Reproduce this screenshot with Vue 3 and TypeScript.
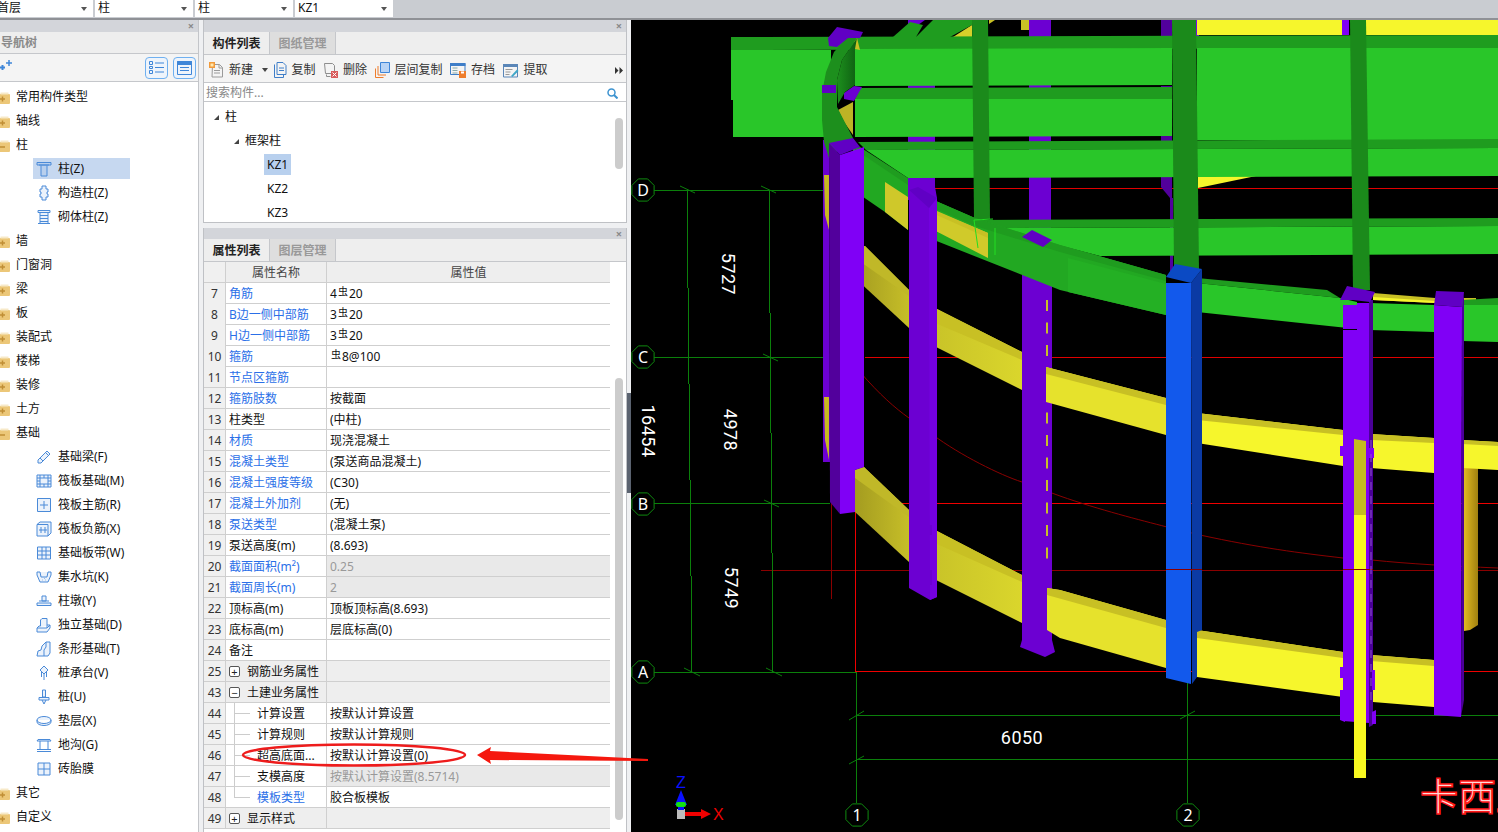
<script setup lang="ts">
type TreeRow = { label: string; kind: 'open' | 'closed' | 'leaf'; icon?: string; sel?: boolean }
type PropRow = {
  n: number; name: string; link?: boolean; val?: string; rebar?: [string, string]; grey?: boolean
  group?: '+' | '-'; child?: boolean; last?: boolean
}

const icons: Record<string, string> = {
  zhu: 'M1 1.5h14v2.5H1z M3 4h10 M5 4.5v10.5h6V4.5',
  gz: 'M6 1h4v3h2v3h-1v2h1v3h-2v3H6v-3H4V9h1V7H4V4h2z',
  qt: 'M2 1.5h12v2H2z M4 3.5v11h8v-11 M4 6.5h8 M4 9.5h8 M4 12.5h8 M2 14.5h12',
  jcl: 'M2 11L11 2l3 3-9 9H2z M4 9l3 3 M9.5 3.5l3 3',
  fb: 'M1 2h14v12H1z M4 5h8v6H4z M1 5h3 M1 8h3 M1 11h3 M12 5h3 M12 8h3 M12 11h3 M4 2v3 M8 2v3 M12 2v3 M4 11v3 M8 11v3 M12 11v3',
  fz: 'M1.500 1.500h13v13h-13z M8 4v8 M4 8h8',
  ff: 'M1 3.500h11v11.500H1z M1 3.500l3-2.500h11v11l-3 3 M5 6v6 M9 6v6 M3 9h8',
  bd: 'M1.500 2h13v12h-13z M6 2v12 M10 2v12 M1.500 6h13 M1.500 10h13',
  js: 'M1 3h3l1 5h6l1-5h3 M1 3v3l3 7h8l3-7V3 M6 11h.5 M9 11h.5 M8 9.500h.5',
  zd: 'M6 3h4v5H6z M3 8h10 M1 10h14v2.500H1z',
  dl: 'M1 15V11h10l3-3v3l-3 4z M1 11l2-2h1.500V3L6 1.500h5V8H14 M11 11V8',
  tx: 'M1 15l1-5 3-1 1-4 4-4h4v11l-2 3z M10 1v5l-2 3v6',
  zc: 'M8 1l4 4-4 4-4-4z M8 9v6 M5.500 7v5 M10.500 7v5',
  z: 'M6.500 1h3v7h-3z M3 8.500h10v2.500H3z M6 11l2 4 2-4',
  dc: 'M1 7a7 3.500 0 0 1 14 0v2a7 3.500 0 0 1-14 0z M1 7a7 3.500 0 0 0 14 0',
  dg: 'M1 14.500h14 M1 12.500h14 M2 2.500h12l1 1.500H1z M4 4v8.500 M12 4v8.500',
  ztm: 'M2 2h12v12H2z M8 2v12 M2 8h12',
}

const navRows: TreeRow[] = [
  { label: '常用构件类型', kind: 'closed' },
  { label: '轴线', kind: 'closed' },
  { label: '柱', kind: 'open' },
  { label: '柱(Z)', kind: 'leaf', icon: 'zhu', sel: true },
  { label: '构造柱(Z)', kind: 'leaf', icon: 'gz' },
  { label: '砌体柱(Z)', kind: 'leaf', icon: 'qt' },
  { label: '墙', kind: 'closed' },
  { label: '门窗洞', kind: 'closed' },
  { label: '梁', kind: 'closed' },
  { label: '板', kind: 'closed' },
  { label: '装配式', kind: 'closed' },
  { label: '楼梯', kind: 'closed' },
  { label: '装修', kind: 'closed' },
  { label: '土方', kind: 'closed' },
  { label: '基础', kind: 'open' },
  { label: '基础梁(F)', kind: 'leaf', icon: 'jcl' },
  { label: '筏板基础(M)', kind: 'leaf', icon: 'fb' },
  { label: '筏板主筋(R)', kind: 'leaf', icon: 'fz' },
  { label: '筏板负筋(X)', kind: 'leaf', icon: 'ff' },
  { label: '基础板带(W)', kind: 'leaf', icon: 'bd' },
  { label: '集水坑(K)', kind: 'leaf', icon: 'js' },
  { label: '柱墩(Y)', kind: 'leaf', icon: 'zd' },
  { label: '独立基础(D)', kind: 'leaf', icon: 'dl' },
  { label: '条形基础(T)', kind: 'leaf', icon: 'tx' },
  { label: '桩承台(V)', kind: 'leaf', icon: 'zc' },
  { label: '桩(U)', kind: 'leaf', icon: 'z' },
  { label: '垫层(X)', kind: 'leaf', icon: 'dc' },
  { label: '地沟(G)', kind: 'leaf', icon: 'dg' },
  { label: '砖胎膜', kind: 'leaf', icon: 'ztm' },
  { label: '其它', kind: 'closed' },
  { label: '自定义', kind: 'closed' },
]

const props: PropRow[] = [
  { n: 7, name: '角筋', link: true, rebar: ['4', '20'] },
  { n: 8, name: 'B边一侧中部筋', link: true, rebar: ['3', '20'] },
  { n: 9, name: 'H边一侧中部筋', link: true, rebar: ['3', '20'] },
  { n: 10, name: '箍筋', link: true, rebar: ['', '8@100'] },
  { n: 11, name: '节点区箍筋', link: true },
  { n: 12, name: '箍筋肢数', link: true, val: '按截面' },
  { n: 13, name: '柱类型', val: '(中柱)' },
  { n: 14, name: '材质', link: true, val: '现浇混凝土' },
  { n: 15, name: '混凝土类型', link: true, val: '(泵送商品混凝土)' },
  { n: 16, name: '混凝土强度等级', link: true, val: '(C30)' },
  { n: 17, name: '混凝土外加剂', link: true, val: '(无)' },
  { n: 18, name: '泵送类型', link: true, val: '(混凝土泵)' },
  { n: 19, name: '泵送高度(m)', val: '(8.693)' },
  { n: 20, name: '截面面积(m²)', link: true, val: '0.25', grey: true },
  { n: 21, name: '截面周长(m)', link: true, val: '2', grey: true },
  { n: 22, name: '顶标高(m)', val: '顶板顶标高(8.693)' },
  { n: 23, name: '底标高(m)', val: '层底标高(0)' },
  { n: 24, name: '备注' },
  { n: 25, name: '钢筋业务属性', group: '+' },
  { n: 43, name: '土建业务属性', group: '-' },
  { n: 44, name: '计算设置', child: true, val: '按默认计算设置' },
  { n: 45, name: '计算规则', child: true, val: '按默认计算规则' },
  { n: 46, name: '超高底面...', child: true, val: '按默认计算设置(0)' },
  { n: 47, name: '支模高度', child: true, val: '按默认计算设置(8.5714)', grey: true },
  { n: 48, name: '模板类型', child: true, last: true, link: true, val: '胶合板模板' },
  { n: 49, name: '显示样式', group: '+' },
]

const combos = ['首层', '柱', '柱', 'KZ1']

const G1 = '#29c629', G2 = '#1f9c1f', G3 = '#1b8a1b', G4 = '#22a822'
const P1 = '#8000f6', P2 = '#6c00d2', P3 = '#52009c', P4 = '#6000c4'
const Y1 = '#f6f62c', Y2 = '#c8c024'

// [x, y, width, colour] of the straight horizontal grid lines
const hLines: [number, number, number, string][] = [
  [910, 188, 588, '#e00000'], [865, 357, 633, '#e00000'], [860, 503, 638, '#f00000'],
  [761, 570, 737, '#8a0000'], [855, 671, 643, '#f00000'],
  [652, 190, 171, '#0b7f0b'], [652, 357, 171, '#0b7f0b'], [652, 503, 178, '#0b7f0b'], [652, 672, 204, '#0b7f0b'],
  [857, 715, 641, '#0b7f0b'], [857, 759, 641, '#0b7f0b'],
]

const back: [string, string][] = [
  ['908,20 925,20 918,25 908,25', P2], ['908,85 935,85 935,200 908,200', P2],
  ['1021,20 1029,20 1029,30 1021,30', Y2], ['1029,20 1051,20 1051,300 1029,300', P2],
  ['1161,20 1172,20 1172,37 1161,37', P3], ['1161,86 1172,86 1172,99 1161,99', P3],
  ['1161,136 1172,136 1172,141 1161,141', P3], ['1161,177 1172,177 1172,198 1170,198 1161,187', P3],
  ['1170,198 1173,198 1173,272 1170,272', P3], ['1196,20 1199,20 1199,37 1196,37', P1],
  ['1197,20 1342,20 1342,35 1197,35', Y1], ['1342,20 1349,20 1349,35 1342,35', P1],
  ['1366,20 1498,20 1498,35 1366,35', Y1], ['1198,176 1256,176 1198,188', Y1],
  ['953,37 972,25 972,37', '#d6d02a'], ['989,20 995,20 989,24', Y2],
]

const bands: [string, string][] = [
  ['731,37 1498,35 1498,48 731,50', G2],
  ['731,50 831,50 831,137 733,137 733,100 731,100', G1], ['855,49 1172,48 1172,85 855,86', G1],
  ['1197,48 1498,48 1498,140 1197,140', G1], ['855,99 1172,99 1172,136 855,137', G1],
  ['860,88 1172,87 1172,99 855,99', G2], ['858,142 1498,139 1498,148 866,150', G2],
  ['866,150 1498,148 1498,176 908,178', G1], ['975,220 1498,218 1498,226 993,228', G2],
  ['993,228 1498,226 1498,254 1100,256', G1],
  ['972,20 988,20 990,219 974,219', G3], ['1172,20 1196,20 1199,270 1174,270', G3],
  ['1350,20 1366,20 1370,290 1353,290', G3],
]

const arcs: [string, string][] = [
  ['893,37 910,22 923,25 916,37', G2], ['916,37 933,20 972,20 972,25 950,37', G2],
  ['823,140 829,140 830,462 823,462', P2],
  ['824,175 829,175 829,230 825,215', '#c8b820'], ['824,397 829,397 829,460 825,440', '#c8b820'],
  ['838,110 853,102 853,135 844,122', '#bdb325'],
  ['844,93 854,86 862,87 854,101 844,99', P2], ['853,38 857,38 860,50 855,49', Y2],
  ['857,38 855,49 855,85 845,92 838,104 837,80 842,60', 'url(#arc)'],
  ['847,38 857,38 842,60 837,80 837,107 853,138 829,158 824,142 822,120 822,93 826,72 834,52', '#1d8f1d'],
  ['822,85 836,85 836,93 822,93', P4],
  ['828,38 837,27 863,32 860,38 848,38 837,47 829,46', P4],
]

const lowerFar: [string, string][] = [
  ['1022,268 1052,268 1052,640 1055,652 1045,657 1020,647 1022,640', P2],
  ['1020,370 1023,370 1023,382 1020,382', P2], ['1020,592 1023,592 1023,612 1020,612', P2],
  ['1464,468 1478,468 1478,625 1470,630 1464,631', 'url(#gold)'],
]

const yellow: [string, string][] = [
  ['855,247 865,246 909,290 909,328 855,278', 'url(#yd)'], ['855,247 865,246 909,290 909,296 855,258', '#c0b828'],
  ['928,312 937,309 1022,352 1022,390 928,343', 'url(#ym)'], ['928,312 937,309 1022,352 1022,360 928,320', Y2],
  ['1046,367 1166,398 1166,435 1046,402', '#e6e22c'], ['1046,367 1166,398 1166,405 1046,374', Y2],
  ['1197,413 1343,430 1343,466 1197,443', Y1], ['1197,413 1343,430 1343,435 1197,420', Y2],
  ['1371,434 1434,438 1434,473 1371,468', Y1], ['1371,434 1434,438 1434,443 1371,440', Y2],
  ['1462,440 1498,442 1498,470 1462,468', Y1], ['1462,440 1498,442 1498,446 1462,444', Y2],
  ['855,470 864,467 909,510 909,562 855,512', 'url(#yd)'], ['855,470 864,467 909,510 909,517 855,478', '#c0b828'],
  ['928,533 937,531 1022,575 1022,623 930,577', 'url(#ym)'], ['928,533 937,531 1022,575 1022,582 928,540', Y2],
  ['1047,588 1060,590 1166,620 1166,668 1060,638 1047,630', '#e6e22c'], ['1047,588 1060,590 1166,620 1166,628 1047,595', Y2],
  ['1197,630 1343,652 1343,697 1197,677', Y1], ['1197,630 1343,652 1343,658 1197,638', Y2],
  ['1371,655 1434,660 1434,707 1373,702', Y1], ['1371,655 1434,660 1434,666 1371,661', Y2],
  ['1373,293 1435,298 1435,303 1373,300', Y2], ['1373,297 1435,301 1435,303 1373,300', Y1],
  ['1462,298 1476,298 1476,303 1462,303', Y2],
]

const front: [string, string][] = [
  ['853,148 885,165 908,180 908,230 885,212 853,190', G4], ['885,182 908,197 908,230 885,212', '#cfc82a'],
  ['853,148 860,147 908,178 908,185', G2],
  ['929,198 975,218 1060,245 1166,275 1166,315 1060,290 929,238', G4],
  ['929,198 975,218 1060,245 1166,275 1166,281 1060,252 975,226 929,206', G2],
  ['928,208 988,233 988,258 928,227', '#d0ca2a'], ['930,208 988,233 988,238 930,212', Y2],
  ['1068,258 1166,284 1166,315 1068,292', '#24b024'],
  ['1197,278 1327,290 1340,298 1197,283', G2], ['1197,283 1340,298 1357,302 1357,329 1197,312', G1],
  ['1370,303 1434,305 1434,332 1370,330', G1], ['1462,300 1498,298 1498,305 1462,305', G2],
  ['1462,305 1498,305 1498,342 1462,341', G1],
]

const columns: [string, string][] = [
  ['909,187 935,187 937,198 937,597 930,600 909,588', P2], ['929,208 937,198 937,597 930,600', '#7400e0'],
  ['909,190 918,187 937,198 929,208', P4],
  ['925,525 932,525 932,535 925,535', P2], ['925,570 932,570 932,585 925,585', P2],
  ['829,143 840,155 840,514 830,502', P3], ['840,155 864,147 864,467 855,470 855,512 840,514', P1],
  ['829,143 853,138 860,147 840,155', P4],
  ['1166,283 1191,283 1191,684 1166,678', '#1259ec'], ['1191,283 1202,269 1202,630 1197,632 1197,677 1192,684', '#0b3aa4'],
  ['1166,277 1175,264 1202,269 1191,283', '#0b4ac4'],
  ['1343,305 1357,305 1357,329 1343,329', P1],
  ['1343,330 1369,330 1369,723 1343,721', P1], ['1357,303 1369,303 1369,330 1357,330', P1],
  ['1369,300 1373,300 1373,725 1369,727', '#4a0098'],
  ['1340,300 1347,286 1375,292 1370,302 1353,300', P4],
  ['1340,446 1345,446 1345,456 1340,456', P1], ['1369,448 1374,448 1374,458 1369,458', P1],
  ['1340,667 1345,667 1345,678 1340,678', P1], ['1340,690 1345,690 1345,722 1340,720', P1],
  ['1372,670 1375,670 1375,690 1372,690', P1], ['1372,712 1376,710 1376,724 1372,724', P1],
  ['1434,305 1462,307 1461,717 1434,715', P1], ['1462,307 1464,292 1464,700 1461,717', '#4a0098'],
  ['1434,305 1436,291 1464,292 1462,307', P4],
  ['1354,439 1366,441 1366,515 1354,515', '#c4bc20'], ['1354,515 1366,515 1366,778 1354,778', '#f8f820'],
]

const dashes = Array.from({ length: 12 }, (_, i) => 300 + i * 22.500)
const grids = [
  { t: 'D', x: 643, y: 190 }, { t: 'C', x: 643, y: 357 }, { t: 'B', x: 643, y: 504 },
  { t: 'A', x: 643, y: 672 }, { t: '1', x: 857, y: 815 }, { t: '2', x: 1188, y: 815 },
]
const octagon = (x: number, y: number) =>
  Array.from({ length: 8 }, (_, i) => {
    const a = (Math.PI / 4) * i + Math.PI / 8
    return `${(x + 12 * Math.cos(a)).toFixed(1)},${(y + 12 * Math.sin(a)).toFixed(1)}`
  }).join(' ')
const ticks = [
  [680, 186, 695, 193], [761, 186, 776, 193], [763, 354, 778, 361], [764, 500, 779, 507],
  [684, 668, 700, 676], [766, 668, 782, 676], [849, 720, 864, 711], [849, 764, 864, 756], [1180, 719, 1195, 711],
]
</script>

<template>
  <div class="app">
    <div class="topbar">
      <div v-for="(c, i) in combos" :key="i" class="combo">
        <span>{{ c }}</span><i class="caret"></i>
      </div>
    </div>
    <div class="main">
      <aside class="nav">
        <div class="strip"><span class="close">×</span></div>
        <div class="nav-title">导航树</div>
        <div class="nav-tools">
          <svg class="plus" width="13" height="12" viewBox="0 0 13 12">
            <path d="M0 7.500h5M2.500 5v5" stroke="#3f86d8" stroke-width="2" fill="none" />
            <path d="M6 3h6M9 0v6" stroke="#3f86d8" stroke-width="1.500" fill="none" />
          </svg>
          <span class="grow"></span>
          <button class="tool-btn">
            <svg width="15" height="13" viewBox="0 0 15 13" fill="none" stroke="#3f86d8">
              <path d="M.5 .5h3v3h-3z M.5 5.500h3v2h-3z M.5 9.500h3v3h-3z M6 2h9 M6 6.500h9 M6 11h9" />
            </svg>
          </button>
          <button class="tool-btn">
            <svg width="15" height="14" viewBox="0 0 15 14" fill="none" stroke="#3f86d8">
              <path d="M.5 .5h14v13H.5z M3 6.500h9 M3 9.500h9" />
              <path d="M.5 .5h14v3H.5z" fill="#3f86d8" />
            </svg>
          </button>
        </div>
        <div class="nav-tree">
          <div v-for="r in navRows" :key="r.label" class="nav-row" :class="{ leaf: r.kind === 'leaf', sel: r.sel }">
            <svg v-if="r.kind !== 'leaf'" class="folder" width="10" height="13" viewBox="6 0 10 13">
              <path d="M0 3a1 1 0 0 1 1-1h4l1.500 1H15a1 1 0 0 1 1 1v8a1 1 0 0 1-1 1H1a1 1 0 0 1-1-1z" fill="#ecc778" />
              <path d="M6.500 1.500h8v2h-8z" fill="#f7e9c8" />
              <path v-if="r.kind === 'closed'" d="M6 8h5M8.500 5.500v5" stroke="#c08e35" stroke-width="1.500" fill="none" />
              <path v-else d="M6 8h5" stroke="#c08e35" stroke-width="1.500" fill="none" />
            </svg>
            <svg v-else class="leaf-icon" width="16" height="16" viewBox="0 0 16 16">
              <path :d="icons[r.icon!]" fill="#4a8ad81c" stroke="#4a8ad8" stroke-width="1" />
            </svg>
            <span>{{ r.label }}</span>
          </div>
        </div>
      </aside>

      <section class="mid">
        <div class="panel list-panel">
          <div class="strip"><span class="close">×</span></div>
          <div class="tabs">
            <div class="tab on">构件列表</div>
            <div class="tab">图纸管理</div>
          </div>
          <div class="tools">
            <div class="tool w55">
              <svg width="15" height="16" viewBox="0 0 15 16" fill="none">
                <path d="M3.500 2.500h7l3 3v9.500h-10.500z M10 2.500v3.500h3.500 M5 8.500h6 M5 11h6" stroke="#9a9a9a" />
                <path d="M0 0h6v6H0z" fill="#f29a3a" /><path d="M1.500 1.500h3v3h-3z" fill="#ffe8b0" />
              </svg>
              <span>新建</span><i class="caret small"></i>
            </div>
            <div class="tool">
              <svg width="14" height="16" viewBox="0 0 14 16" fill="none" stroke="#3f7ec8">
                <path d="M1.500 2.500v13h9V12 M4 .5h6l3 3v9H4z M6 6h5 M6 8.500h5" />
              </svg>
              <span>复制</span>
            </div>
            <div class="tool">
              <svg width="15" height="16" viewBox="0 0 15 16" fill="none">
                <path d="M1.500 1.500h8l2 2v8h-9z M3.500 12.500v2h4" stroke="#8e8e8e" />
                <path d="M8 9h7v7H8z" fill="#d95b5b" /><path d="M9.500 10.500l4 4M13.500 10.500l-4 4" stroke="#fff" />
              </svg>
              <span>删除</span>
            </div>
            <div class="tool">
              <svg width="15" height="16" viewBox="0 0 15 16" fill="none">
                <path d="M.5 6.500v9h8 M3 4v9h8" stroke="#ee7d2c" />
                <path d="M5.500 .5h9v10h-9z" fill="#b9d4f5" stroke="#3f86d8" />
              </svg>
              <span>层间复制</span>
            </div>
            <div class="tool">
              <svg width="16" height="16" viewBox="0 0 16 16" fill="none">
                <path d="M.5 1.500h14.500v11H.5z" stroke="#3f7ec8" /><path d="M0 1h15.500v3H0z" fill="#3f7ec8" />
                <path d="M2.500 6h5M2.500 8.500h5M2.500 11h5" stroke="#8aa" />
                <path d="M9 9h7v7H9z" fill="#ee7d2c" /><path d="M11 9.500h3v2h-3z" fill="#fff" />
              </svg>
              <span>存档</span>
            </div>
            <div class="tool">
              <svg width="16" height="16" viewBox="0 0 16 16" fill="none">
                <path d="M.5 2.500h14v12.500H.5z" stroke="#5a86b8" /><path d="M0 2h15v3H0z" fill="#5a86b8" />
                <path d="M2.500 7.500h7M2.500 10h5M2.500 12.500h4" stroke="#999" />
                <path d="M8 14l6-6.500 1.500 1.500-6 6z" fill="#3fa7c8" />
              </svg>
              <span>提取</span>
            </div>
            <span class="grow"></span>
            <svg class="more" width="8" height="7" viewBox="0 0 8 7"><path d="M0 0l3.500 3.500L0 7zM4.500 0L8 3.500 4.500 7z" fill="#333" /></svg>
          </div>
          <div class="search">
            <span>搜索构件...</span>
            <svg width="11" height="11" viewBox="0 0 11 11" fill="none" stroke="#3d93d0" stroke-width="1.500">
              <circle cx="4.500" cy="4.500" r="3.500" /><path d="M7 7l3.500 3.500" stroke-width="2" />
            </svg>
          </div>
          <div class="list-tree">
            <div class="lt-row l0"><i class="tri"></i><span>柱</span></div>
            <div class="lt-row l1"><i class="tri"></i><span>框架柱</span></div>
            <div class="lt-row l2"><span class="kz sel">KZ1</span></div>
            <div class="lt-row l2"><span class="kz">KZ2</span></div>
            <div class="lt-row l2"><span class="kz">KZ3</span></div>
            <div class="thumb small-thumb"></div>
          </div>
        </div>

        <div class="panel prop-panel">
          <div class="strip"><span class="close">×</span></div>
          <div class="tabs">
            <div class="tab on">属性列表</div>
            <div class="tab">图层管理</div>
          </div>
          <div class="prop-body">
            <div class="table">
              <div class="row head">
                <div class="c-num"></div>
                <div class="c-name">属性名称</div>
                <div class="c-val">属性值</div>
              </div>
              <div v-for="p in props" :key="p.n" class="row">
                <div class="c-num">{{ p.n }}</div>
                <div class="c-name" :class="{ link: p.link, group: p.group, child: p.child, last: p.last }">
                  <span v-if="p.group" class="exp">{{ p.group === '+' ? '+' : '−' }}</span>
                  <span class="nm">{{ p.name }}</span>
                </div>
                <div class="c-val" :class="{ grey: p.grey, groupv: p.group }">
                  <template v-if="p.rebar">{{ p.rebar[0] }}<span class="bar">虫</span>{{ p.rebar[1] }}</template>
                  <template v-else>{{ p.val }}</template>
                </div>
              </div>
            </div>
            <div class="track"><div class="thumb big-thumb"></div></div>
          </div>
        </div>
      </section>

      <div class="splitter"><div class="grip"></div></div>

      <svg class="scene" viewBox="631 20 867 812" width="867" height="812" xmlns="http://www.w3.org/2000/svg">
        <defs>
          <linearGradient id="yd" x1="0" x2="1" y1="0" y2="0"><stop offset="0" stop-color="#a49c20" /><stop offset="1" stop-color="#c6be28" /></linearGradient>
          <linearGradient id="ym" x1="0" x2="1" y1="0" y2="0"><stop offset="0" stop-color="#c8c228" /><stop offset="1" stop-color="#dad62c" /></linearGradient>
          <linearGradient id="gold" x1="0" x2="1" y1="0" y2="0"><stop offset="0" stop-color="#e2ba20" /><stop offset="1" stop-color="#a08010" /></linearGradient>
          <linearGradient id="arc" x1="0" x2="1" y1="0" y2="0"><stop offset="0" stop-color="#1d8f1d" /><stop offset="1" stop-color="#0e5f12" /></linearGradient>
        </defs>
        <rect x="631" y="20" width="867" height="812" fill="#000" />

        <rect v-for="(l, i) in hLines" :key="'h' + i" :x="l[0]" :y="l[1]" :width="l[2]" height="1" :fill="l[3]" />
        <g fill="none" stroke-width="1" shape-rendering="crispEdges">
          <path d="M855 512L856 671" stroke="#ee0000" />
          <path d="M831 357L832 599" stroke="#8a0000" />
        </g>
        <g fill="none" stroke-width="1">
          <path d="M860 372C880 395 895 408 909 418L933 435C960 455 1000 475 1022 482L1060 496C1100 510 1140 520 1167 527L1200 535C1260 548 1300 553 1343 558L1372 560C1410 564 1450 566 1498 568" stroke="#8a0000" />
          <path d="M1447 578L1444 601" stroke="#a00000" />
        </g>

        <g fill="none" stroke="#0b7f0b" stroke-width="1" shape-rendering="crispEdges">
          <path d="M687 190L692 672M769 190L773 672M856 672L857 803M1187 683L1188 803" />
        </g>
        <g fill="none" stroke="#0b7f0b" stroke-width="1">
          <line v-for="(t, i) in ticks" :key="i" :x1="t[0]" :y1="t[1]" :x2="t[2]" :y2="t[3]" />
        </g>

        <polygon v-for="(s, i) in back" :key="'b' + i" :points="s[0]" :fill="s[1]" />
        <polygon v-for="(s, i) in bands" :key="'n' + i" :points="s[0]" :fill="s[1]" />
        <polygon v-for="(s, i) in arcs" :key="'a' + i" :points="s[0]" :fill="s[1]" />
        <polygon v-for="(s, i) in lowerFar" :key="'l' + i" :points="s[0]" :fill="s[1]" />
        <rect v-for="d in dashes" :key="d" x="1046" :y="d" width="2" height="11" fill="#c8c028" />
        <polygon v-for="(s, i) in yellow" :key="'y' + i" :points="s[0]" :fill="s[1]" />
        <polygon v-for="(s, i) in front" :key="'f' + i" :points="s[0]" :fill="s[1]" />
        <polygon points="1022,237 1032,230 1052,240 1043,247" :fill="P4" />
        <path d="M974 220L993 219M974 220L978 248M995 228V255" stroke="#22dd22" fill="none" />
        <polygon v-for="(s, i) in columns" :key="'c' + i" :points="s[0]" :fill="s[1]" />
        <rect x="1166" y="569" width="36" height="1" fill="#8a0000" />
        <rect x="1343" y="569" width="30" height="1" fill="#8a0000" />
        <path d="M1371 440V700" stroke="#9050d0" stroke-dasharray="8 6" />

        <g v-for="g in grids" :key="g.t">
          <polygon :points="octagon(g.x, g.y)" fill="#000" stroke="#0f8a0f" />
          <text class="grid-label" :x="g.x" :y="g.y + 6" text-anchor="middle">{{ g.t }}</text>
        </g>

        <text class="dim" transform="translate(722 274) rotate(90)" text-anchor="middle">5727</text>
        <text class="dim" transform="translate(724 430) rotate(90)" text-anchor="middle">4978</text>
        <text class="dim" transform="translate(725 588) rotate(90)" text-anchor="middle">5749</text>
        <text class="dim" transform="translate(642 431) rotate(90)" text-anchor="middle">16454</text>
        <text class="dim" x="1022" y="744" text-anchor="middle">6050</text>

        <rect x="677" y="809" width="8" height="10" fill="#bbb" />
        <polygon points="681,790 687,805 684,805 684,810 678,810 678,805 675,805" fill="#0a10ff" />
        <rect x="676" y="802" width="10" height="5" rx="2" fill="#12e012" />
        <polygon points="685,812 701,812 701,809 711,814 701,819 701,816 685,816" fill="#f00000" />
        <text class="axis" x="713" y="820" fill="#f00000">X</text>
        <text class="axis" x="676" y="788" fill="#0a10ff">Z</text>

        <text class="brand" x="1420" y="810">卡西亚</text>
      </svg>
    </div>

    <svg class="mark" width="660" height="60" viewBox="0 0 660 60">
      <ellipse cx="354" cy="30" rx="111" ry="10.500" fill="none" stroke="#ee1c1c" stroke-width="2.500" />
      <polygon points="477,30 491,22 490,26 648,34 648,36 490,35 491,39" fill="#f5180e" />
    </svg>
  </div>
</template>

<style>
html, body { margin: 0; padding: 0; background: #fff; }
</style>

<style scoped>
.app {
  position: relative; width: 1498px; height: 832px; overflow: hidden; display: flex; flex-direction: column;
  font: 12px/1.2 "Noto Sans", "Noto Sans CJK SC", sans-serif; color: #111; background: #eff0f2;
}
.topbar {
  height: 18px; flex: none; display: flex; gap: 2px; background: #c9ccd1; border-bottom: 2px solid #8f9196;
}
.combo {
  width: 98px; height: 17px; background: #fff; display: flex; align-items: center; justify-content: space-between;
  padding: 0 6px 0 3px; box-sizing: border-box; font-size: 12px;
}
.combo:first-child { width: 93px; padding-left: 0; }
.combo:first-child span { margin-left: -3px; }
.caret { width: 0; height: 0; border: 3px solid transparent; border-top: 4px solid #555; border-bottom: 0; display: block; }
.caret.small { border-top-color: #444; margin-left: 5px; }
.main { flex: 1; display: flex; min-height: 0; }
.nav { flex: none; background: #fff; border-right: 1px solid #c3c5c9; margin-right: 4px; width: 198px; display: flex; flex-direction: column; overflow: hidden; }
.strip { height: 12px; flex: none; background: #d3d5da; position: relative; }
.close { position: absolute; right: 4px; top: 0; font-size: 11px; font-weight: 700; line-height: 11px; color: #8a8a8a; }
.nav-title { height: 20px; line-height: 20px; padding-top: 1px; flex: none; background: #eee; color: #8a8a8a; font-weight: 600; border-bottom: 1px solid #c5c7cb; padding-left: 1px; }
.nav-tools { height: 27px; flex: none; display: flex; align-items: center; gap: 5px; background: #f4f4f4; border-bottom: 1px solid #c5c7cb; padding-right: 2px; }
.plus { margin-bottom: 4px; }
.grow { flex: 1; }
.tool-btn { width: 23px; height: 22px; padding: 0; border: 1px solid #6fb0f0; border-radius: 4px; background: #eef4fb; display: flex; align-items: center; justify-content: center; }
.nav-tree { flex: 1; padding-top: 3px; }
.nav-row { height: 24px; display: flex; align-items: center; gap: 6px; }
.nav-row.leaf { padding-left: 36px; width: 97px; box-sizing: border-box; white-space: nowrap; }
.nav-row.sel { background: linear-gradient(#fff 0, #fff 1px, #c6d8f0 1px, #c6d8f0 22px, #fff 22px); margin-left: 33px; padding-left: 3px; }
.folder { flex: none; }
.leaf-icon { flex: none; }
.mid { width: 424px; flex: none; display: flex; flex-direction: column; gap: 5px; min-height: 0; }
.panel { background: #fff; border-left: 1px solid #bfc1c5; border-right: 1px solid #bfc1c5; display: flex; flex-direction: column; box-sizing: border-box; }
.list-panel { height: 203px; flex: none; border-bottom: 1px solid #bfc1c5; }
.prop-panel { flex: 1; min-height: 0; overflow: hidden; }
.prop-panel .strip { height: 11px; }
.tabs { height: 22px; flex: none; display: flex; background: #eee; border-bottom: 1px solid #c5c7cb; }
.tab { width: 65px; height: 21px; padding-top: 1px; line-height: 22px; text-align: center; color: #999; font-weight: 600; background: #dedede; border-right: 1px solid #c5c7cb; box-sizing: content-box; }
.tab.on { color: #222; background: #eee; }
.tools { height: 24px; padding: 3px 3px 0 5px; flex: none; display: flex; align-items: center; gap: 7.500px; background: #f4f4f4; border-bottom: 1px solid #c5c7cb; }
.tools svg { flex: none; }
.tool { display: flex; align-items: center; gap: 5px; color: #333; white-space: nowrap; }
.tool.w55 { width: 56px; gap: 4px; }
.tool.w55 span { margin-left: 1px; }
.search { height: 16px; padding: 2px 8px 0 2px; flex: none; display: flex; align-items: center; justify-content: space-between; color: #888; border-bottom: 1px solid #c5c7cb; }
.list-tree { flex: 1; position: relative; padding-top: 2px; }
.lt-row { height: 24px; display: flex; align-items: center; gap: 6px; }
.l0 { padding-left: 10px; height: 22px; padding-top: 2px; }
.l1 { padding-left: 30px; height: 22px; padding-top: 2px; }
.l2 { padding-left: 60px; }
.tri { width: 0; height: 0; border-left: 5px solid transparent; border-bottom: 5px solid #444; display: block; }
.kz { padding: 0 3px; line-height: 21px; }
.kz.sel { background: #b8d0ee; }
.thumb { position: absolute; width: 8px; background: #ccc; border-radius: 4px; }
.small-thumb { right: 3px; top: 16px; height: 51px; }
.prop-body { flex: 1; display: flex; min-height: 0; }
.table { width: 406px; flex: none; }
.row { display: grid; grid-template-columns: 22px 101px 1fr; height: 21px; box-sizing: border-box; border-bottom: 1px solid #cfcfcf; line-height: 19px; }
.row > div { padding-top: 1px; }
.row.head { background: #eee; text-align: center; color: #444; }
.c-num { background: #f0f0f0; border-right: 1px solid #cfcfcf; text-align: center; color: #333; font-size: 12px; }
.c-name { border-right: 1px solid #cfcfcf; padding-left: 3px; white-space: nowrap; overflow: hidden; position: relative; }
.row.head .c-name { text-align: center; padding-left: 0; }
.row.head .c-val { background: #eee; padding-left: 0; }
.c-val { padding-left: 3px; white-space: nowrap; }
.link { color: #2a6fe8; }
.c-val.grey { background: #e9e9e9; color: #999; }
.c-val.groupv { background: #eee; }
.c-name.group { background: #eee; display: flex; align-items: center; gap: 7px; }
.c-name.child { padding-left: 31px; }
.c-name.child::before { content: ""; position: absolute; left: 8px; top: 0; bottom: 0; border-left: 1px solid #ccc; }
.c-name.child::after { content: ""; position: absolute; left: 8px; top: 10px; width: 16px; border-top: 1px solid #ccc; }
.c-name.last::before { bottom: 10px; }
.exp { width: 11px; height: 11px; border: 1px solid #555; border-radius: 2px; background: #fff; display: flex; align-items: center; justify-content: center; line-height: 10px; font-size: 11px; color: #222; box-sizing: border-box; flex: none; }
.bar { font-size: 10px; position: relative; top: -3px; margin: 0 1px; }
.track { flex: 1; position: relative; background: #fff; }
.big-thumb { left: 5px; top: 116px; height: 442px; }
.splitter { width: 4px; flex: none; background: #eff0f2; position: relative; }
.grip { position: absolute; left: 0; top: 373px; width: 4px; height: 100px; background: #5b6370; }
.scene { display: block; flex: none; }
.grid-label { font: 16px "Noto Sans", sans-serif; fill: #fff; }
.dim { font: 18px "Roboto", sans-serif; fill: #fff; letter-spacing: .5px; }
.axis { font: 16px "Liberation Sans", sans-serif; }
.brand { font: 38px "Noto Sans CJK SC", sans-serif; fill: #ffd8d8; stroke: #ff1818; stroke-width: 1.500px; }
.mark { position: absolute; left: 0; top: 725px; pointer-events: none; }
</style>
